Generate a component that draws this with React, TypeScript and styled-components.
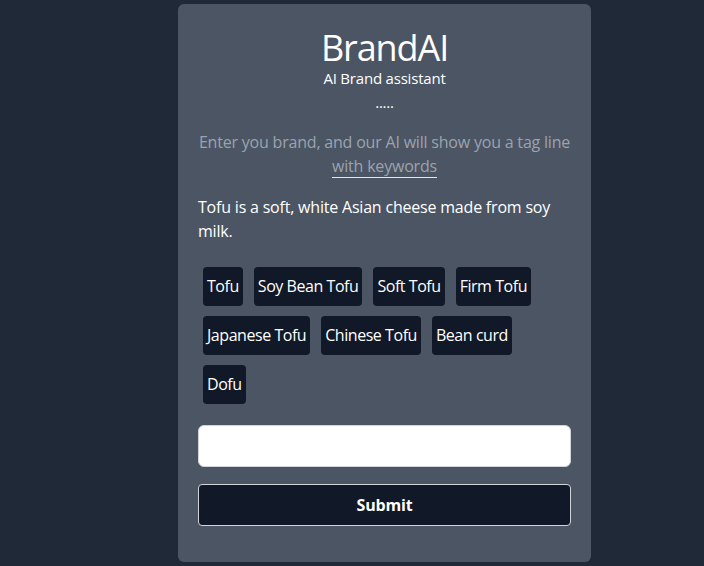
import React from "react";
import styled, { createGlobalStyle } from "styled-components";

const Global = createGlobalStyle`
  html, body { margin: 0; padding: 0; background: #1f2937; }
  body { font-family: "Open Sans", "Noto Sans", sans-serif; letter-spacing: -0.2px; }
  * { box-sizing: border-box; }
`;

const Page = styled.div`
  min-height: 566px;
  display: flex;
  justify-content: flex-start;
  padding: 4px 0 4px 178px;
`;

const Card = styled.div`
  width: 413px;
  height: 558px;
  background: #4b5563;
  border-radius: 6px;
  padding: 23px 20px 20px;
  display: flex;
  flex-direction: column;
  color: #fff;
`;

const Header = styled.div`
  display: flex;
  flex-direction: column;
  align-items: center;
`;

const Title = styled.h1`
  margin: 0;
  font-size: 36px;
  font-weight: 400;
  line-height: 42px;
  letter-spacing: -1.1px;
`;

const Subtitle = styled.div`
  font-size: 15px;
  line-height: 18px;
`;

const Dots = styled.div`
  font-size: 15px;
  line-height: 20px;
  margin-top: 5px;
`;

const Intro = styled.p`
  margin: 18px 0 0;
  text-align: center;
  color: #9ca3af;
  font-size: 16px;
  line-height: 24px;
`;

const Underlined = styled.span`
  border-bottom: 1px solid #e5e7eb;
`;

const Description = styled.p`
  margin: 17px 0 0;
  font-size: 16px;
  line-height: 24px;
  color: #fff;
`;

const Chips = styled.div`
  display: flex;
  flex-wrap: wrap;
  margin-top: 19px;
`;

const Chip = styled.span`
  background: #111827;
  color: #fff;
  border-radius: 4px;
  padding: 7px 4px 8px;
  margin: 5px 6px 5px 5px;
  font-size: 16px;
  line-height: 24px;
  letter-spacing: -0.45px;
`;

const Input = styled.input`
  margin-top: 16px;
  height: 42px;
  width: 100%;
  background: #fff;
  border: 1px solid #d1d5db;
  border-radius: 6px;
  padding: 0 12px;
  font-size: 16px;
  font-family: inherit;
`;

const Submit = styled.button`
  margin-top: 17px;
  height: 42px;
  width: 100%;
  background: #111827;
  color: #fff;
  border: 1px solid #d1d5db;
  border-radius: 4px;
  font-size: 16px;
  font-weight: 700;
  font-family: inherit;
  letter-spacing: -0.2px;
`;

const keywords = [
  "Tofu",
  "Soy Bean Tofu",
  "Soft Tofu",
  "Firm Tofu",
  "Japanese Tofu",
  "Chinese Tofu",
  "Bean curd",
  "Dofu",
];

export default function App() {
  return (
    <>
      <Global />
      <Page>
        <Card>
          <Header>
            <Title>BrandAI</Title>
            <Subtitle>AI Brand assistant</Subtitle>
            <Dots>.....</Dots>
          </Header>
          <Intro>
            Enter you brand, and our AI will show you a tag line{" "}
            <Underlined>with keywords</Underlined>
          </Intro>
          <Description>
            Tofu is a soft, white Asian cheese made from soy milk.
          </Description>
          <Chips>
            {keywords.map((k) => (
              <Chip key={k}>{k}</Chip>
            ))}
          </Chips>
          <Input />
          <Submit>Submit</Submit>
        </Card>
      </Page>
    </>
  );
}
